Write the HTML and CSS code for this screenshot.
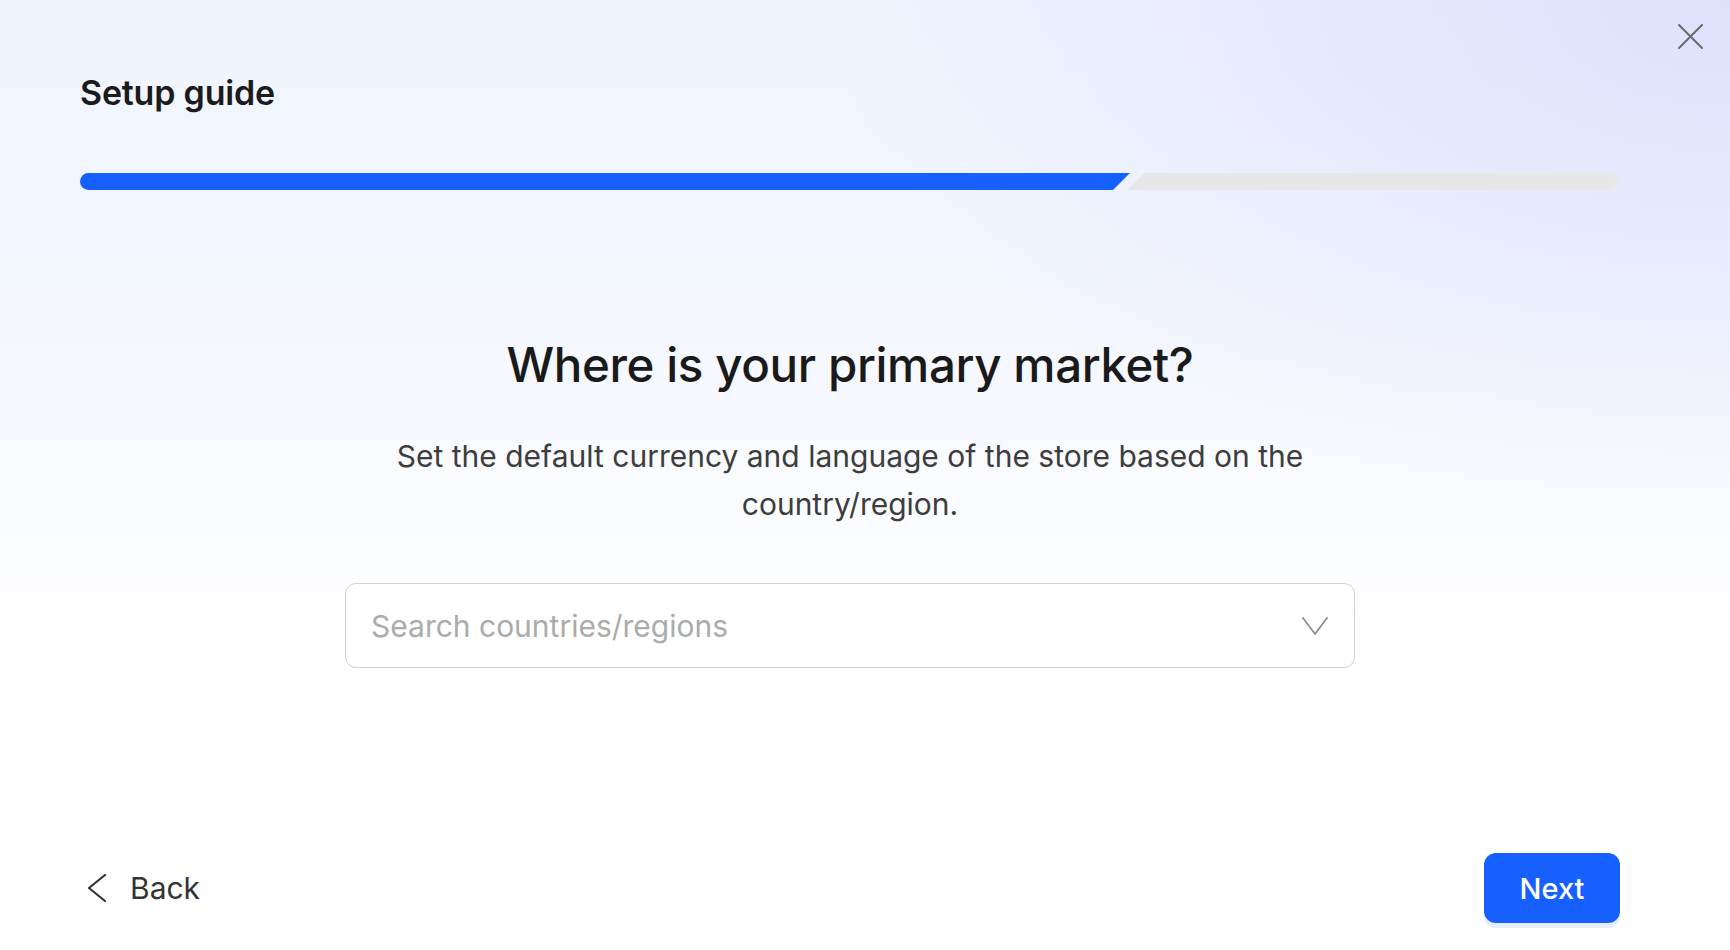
FILE: index.html
```html
<!DOCTYPE html>
<html lang="en">
<head>
<meta charset="utf-8">
<title>Setup guide</title>
<link rel="stylesheet" href="styles.css">
</head>
<body>
<div class="page">
  <button class="close" aria-label="Close">
    <svg width="25" height="25" viewBox="0 0 25 25"><path d="M1 1 L24 24 M24 1 L1 24" stroke="#6b6b6b" stroke-width="2" fill="none" stroke-linecap="round"/></svg>
  </button>
  <header class="header">
    <h1 class="guide-title">Setup guide</h1>
    <div class="progress">
      <div class="progress-done"></div>
      <div class="progress-rest"></div>
    </div>
  </header>
  <main class="content">
    <h2 class="question">Where is your primary market?</h2>
    <p class="desc">Set the default currency and language of the store based on the country/region.</p>
    <div class="select">
      <span class="placeholder">Search countries/regions</span>
      <svg class="select-arrow" width="26" height="18" viewBox="0 0 26 18"><path d="M1 1 L13 17 L25 1" stroke="#8a8a8a" stroke-width="1.7" fill="none" stroke-linejoin="round" stroke-linecap="round"/></svg>
    </div>
  </main>
  <footer class="footer">
    <button class="back">
      <svg width="20" height="28" viewBox="0 0 20 28"><path d="M18 1 L2 14 L18 27" stroke="#333" stroke-width="2.2" fill="none" stroke-linecap="round" stroke-linejoin="round"/></svg>
      <span>Back</span>
    </button>
    <button class="next">Next</button>
  </footer>
</div>
</body>
</html>
```
FILE: styles.css
```css
* { box-sizing: border-box; }
html, body { margin: 0; padding: 0; }
body {
  width: 1730px;
  height: 950px;
  overflow: hidden;
  font-family: Inter, "Noto Sans", "Liberation Sans", sans-serif;
  background:
    radial-gradient(ellipse 900px 520px at 100% 0%, rgba(222, 224, 251, 0.95), rgba(222, 224, 251, 0) 100%),
    linear-gradient(180deg, #eff4fe 0%, #f4f7fe 35%, #fbfcff 55%, #ffffff 70%);
}
.page {
  position: relative;
  height: 950px;
  padding: 73px 110px 27px 80px;
  display: flex;
  flex-direction: column;
}
.close {
  position: absolute;
  top: 24px;
  left: 1678px;
  width: 25px;
  height: 25px;
  padding: 0;
  border: 0;
  background: none;
  cursor: pointer;
  display: flex;
}
.header { display: flex; flex-direction: column; }
.guide-title {
  margin: 0;
  font-size: 34px;
  line-height: 40px;
  font-weight: 600;
  color: #1b1b1b;
  letter-spacing: -0.2px;
}
.progress {
  margin-top: 60px;
  height: 17px;
  display: flex;
}
.progress-done {
  width: 1050px;
  height: 100%;
  background: #1660ff;
  border-radius: 9px 0 0 9px;
  clip-path: polygon(0 0, 100% 0, calc(100% - 17px) 100%, 0 100%);
}
.progress-rest {
  margin-left: -3px;
  flex: 1;
  height: 100%;
  background: #e7e7e8;
  clip-path: polygon(17px 0, calc(100% - 8px) 0, 100% 50%, calc(100% - 8px) 100%, 0 100%);
}
.content {
  margin-top: 145px;
  display: flex;
  flex-direction: column;
  align-items: center;
}
.question {
  margin: 0;
  font-size: 47.5px;
  line-height: 60px;
  font-weight: 500;
  color: #1a1a1a;
  letter-spacing: -0.4px;
}
.desc {
  margin: 37px 0 0;
  width: 1010px;
  text-align: center;
  font-size: 30px;
  line-height: 48px;
  color: #3d3d3d;
}
.select {
  margin-top: 55px;
  width: 1010px;
  height: 85px;
  border: 1.5px solid #d2d2d2;
  border-radius: 11px;
  background: #ffffff;
  display: flex;
  align-items: center;
  justify-content: space-between;
  padding: 0 26px 0 25px;
}
.placeholder {
  font-size: 30px;
  color: #ababab;
}
.footer {
  margin-top: auto;
  display: flex;
  align-items: center;
  justify-content: space-between;
}
.back {
  display: flex;
  align-items: center;
  gap: 23px;
  padding: 0 0 0 7px;
  border: 0;
  background: none;
  font-family: inherit;
  font-size: 30px;
  color: #333333;
  cursor: pointer;
}
.next {
  width: 136px;
  height: 70px;
  border: 0;
  border-radius: 12px;
  background: #1660ff;
  color: #ffffff;
  font-family: inherit;
  font-size: 29px;
  font-weight: 500;
  box-shadow: 0 5px 0 #e4eeff;
  cursor: pointer;
}
```
